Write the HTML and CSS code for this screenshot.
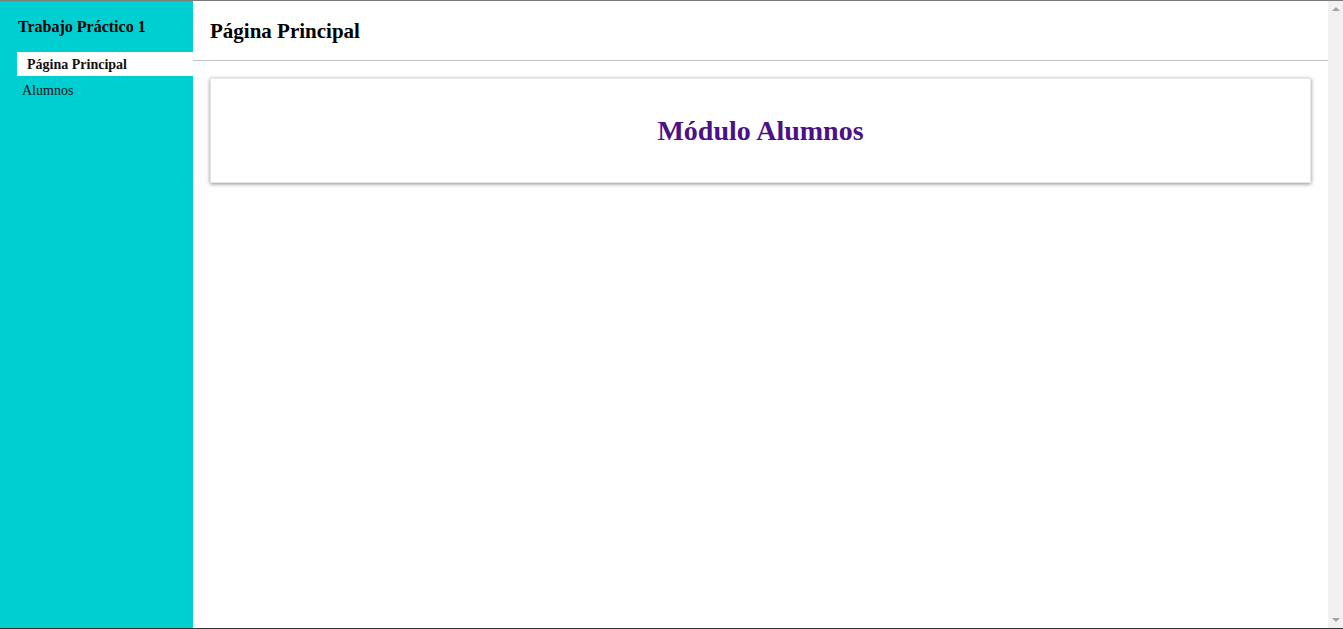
FILE: index.html
```html
<!DOCTYPE html>
<html lang="es">
<head>
<meta charset="utf-8">
<title>Trabajo Práctico 1</title>
<link rel="stylesheet" href="styles.css">
</head>
<body>
<div class="layout">
  <aside class="sidebar">
    <h3 class="brand">Trabajo Práctico 1</h3>
    <nav class="menu">
      <a class="menu-item active" href="#">Página Principal</a>
      <a class="menu-item" href="#">Alumnos</a>
    </nav>
  </aside>
  <main class="main">
    <header class="topbar">
      <h2 class="page-title">Página Principal</h2>
    </header>
    <section class="content">
      <div class="card">
        <h1 class="card-title">Módulo Alumnos</h1>
      </div>
    </section>
  </main>
  <div class="scrollbar">
    <span class="arrow up"></span>
    <span class="arrow down"></span>
  </div>
</div>
</body>
</html>
```

FILE: styles.css
```css
html, body {
  margin: 0;
  padding: 0;
  height: 100%;
}
body {
  font-family: "Liberation Serif", "Times New Roman", serif;
  color: #000;
  background: #fff;
  border-top: 1px solid #7a7a7a;
  box-sizing: border-box;
}
.layout {
  display: flex;
  height: 627px;
  border-bottom: 1px solid #333;
}
.sidebar {
  width: 193px;
  flex: none;
  background: #00cfd2;
  padding-top: 16px;
  box-sizing: border-box;
}
.brand {
  margin: 0 0 16px 18px;
  font-size: 16px;
  font-weight: bold;
  line-height: 19px;
}
.menu {
  display: flex;
  flex-direction: column;
  padding-left: 17px;
}
.menu-item {
  display: block;
  color: #111;
  text-decoration: none;
  font-size: 14px;
  line-height: 26px;
  padding-left: 5px;
  height: 24px;
}
.menu-item.active {
  background: #fff;
  font-weight: bold;
  padding-left: 10px;
  margin-bottom: 2px;
}
.main {
  flex: 1;
  display: flex;
  flex-direction: column;
}
.topbar {
  height: 59px;
  border-bottom: 1px solid #c4c4c4;
  display: flex;
  align-items: center;
  padding-left: 17px;
}
.page-title {
  margin: 0;
  font-size: 21px;
  font-weight: bold;
  line-height: 24px;
}
.content {
  padding: 17px 17px 0 17px;
}
.card {
  height: 105px;
  box-shadow: 0 1px 4px rgba(0,0,0,0.45);
  border: 1px solid #e6e6e6;
  box-sizing: border-box;
  display: flex;
  align-items: center;
  justify-content: center;
}
.card-title {
  margin: 0;
  color: #4a1286;
  font-size: 28px;
  font-weight: bold;
  line-height: 32px;
}
.scrollbar {
  width: 15px;
  flex: none;
  background: #f1f1f1;
  display: flex;
  flex-direction: column;
  justify-content: space-between;
  align-items: center;
  padding: 6px 0;
  box-sizing: border-box;
}
.arrow {
  width: 0;
  height: 0;
  border-left: 4px solid transparent;
  border-right: 4px solid transparent;
}
.arrow.up {
  border-bottom: 4px solid #a3a3a3;
}
.arrow.down {
  border-top: 4px solid #a3a3a3;
}
```
